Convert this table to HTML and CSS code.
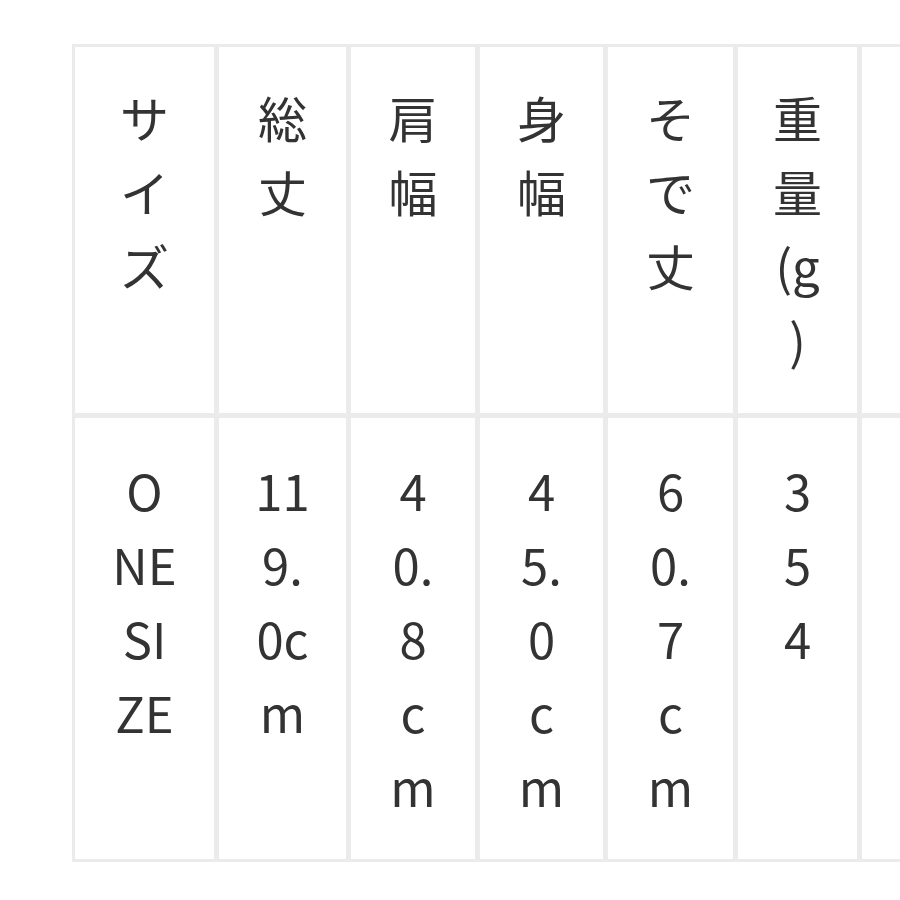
FILE: index.html
```html
<!DOCTYPE html>
<html lang="ja">
<head>
<meta charset="utf-8">
<title>サイズ表</title>
<link rel="stylesheet" href="styles.css">
</head>
<body>
<table class="size-table">
  <thead>
    <tr>
      <th class="c1">サ<br>イ<br>ズ</th>
      <th class="c2">総<br>丈</th>
      <th class="c3">肩<br>幅</th>
      <th class="c4">身<br>幅</th>
      <th class="c5">そ<br>で<br>丈</th>
      <th class="c6">重<br>量<br>(g<br>)</th>
      <th class="c7"></th>
    </tr>
  </thead>
  <tbody>
    <tr>
      <td>O<br>NE<br>SI<br>ZE</td>
      <td>11<br>9.<br>0c<br>m</td>
      <td>4<br>0.<br>8<br>c<br>m</td>
      <td>4<br>5.<br>0<br>c<br>m</td>
      <td>6<br>0.<br>7<br>c<br>m</td>
      <td>3<br>5<br>4</td>
      <td></td>
    </tr>
  </tbody>
</table>
</body>
</html>
```
FILE: styles.css
```css
html, body {
  margin: 0;
  background: #ffffff;
  overflow: hidden;
}

body {
  padding: 44px 0 0 72px;
  font-family: "Noto Sans CJK JP", "Noto Sans", sans-serif;
  color: #333333;
}

.size-table {
  table-layout: fixed;
  width: 943px;
  border-collapse: separate;
  border-spacing: 0;
  border: 3px solid #ebebeb;
}

.size-table th,
.size-table td {
  box-sizing: border-box;
  padding: 0;
  text-align: center;
  vertical-align: top;
  font-size: 49px;
  font-weight: 400;
  line-height: 74px;
  border-right: 5px solid #ebebeb;
}

.size-table th {
  height: 371px;
  padding-top: 33px;
  border-bottom: 5px solid #ebebeb;
}

.size-table td {
  height: 441px;
  padding-top: 35px;
}

.c1 { width: 144px; }
.c2 { width: 132px; }
.c3 { width: 129px; }
.c4 { width: 128px; }
.c5 { width: 130px; }
.c6 { width: 124px; }
.c7 { width: 150px; }
```
